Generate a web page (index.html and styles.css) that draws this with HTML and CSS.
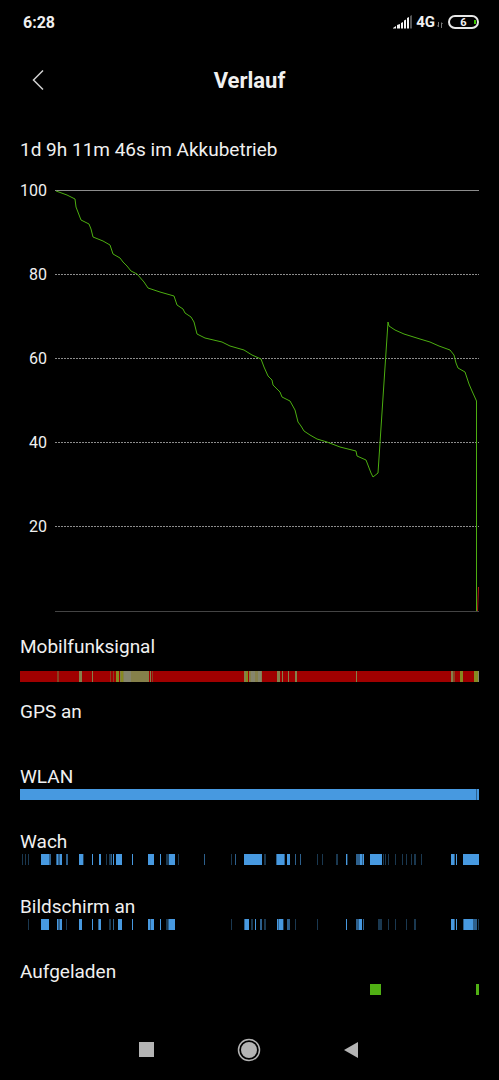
FILE: index.html
```
<!DOCTYPE html>
<html lang="de">
<head>
    <meta charset="UTF-8">
    <meta name="viewport" content="width=device-width, initial-scale=1.0">
    <title>Verlauf</title>
    <link rel="stylesheet" href="styles.css">
</head>
<body>
    <div class="statusbar">
        <span class="clock">6:28</span>
        <div class="status-icons">
            <svg class="signal" width="19" height="14" viewBox="0 0 19 14">
                <path d="M0 13.500V13l3-2v2.500z M4 13.500V10l3-1v4.500z M8 13.500V8l2-1v6.500z M11 13.500V5.500l2-1v9z M14 13.500V3l2-1v11.500z" fill="#f2f2f2"/>
                <path d="M17 13.500V1l2-1v13.500z" fill="#555"/>
            </svg>
            <span class="network">4G</span>
            <svg class="traffic" width="6" height="6" viewBox="0 0 6 6">
                <path d="M1.500 0v5M0.500 3.500l1 1.500M4.500 6V1M4.500 0.500l1 1.500" stroke="#777" fill="none"/>
            </svg>
            <div class="battery">
                <span>6</span>
                <i class="battery-level"></i>
            </div>
        </div>
    </div>

    <header class="header">
        <button class="back" type="button" aria-label="Zurück">
            <svg width="12" height="20" viewBox="0 0 12 20">
                <path d="M11 0.500L1.500 10l9.500 9.500" fill="none" stroke="#d0d0d0" stroke-width="1.500"/>
            </svg>
        </button>
        <h1>Verlauf</h1>
    </header>

    <main class="content">
        <p class="summary">1d 9h 11m 46s im Akkubetrieb</p>

        <div class="chart">
            <div class="axis">
                <span>100</span>
                <span>80</span>
                <span>60</span>
                <span>40</span>
                <span>20</span>
            </div>
            <svg class="plot" viewBox="0 0 424 422" preserveAspectRatio="none">
                <path d="M0 0.500h424" stroke="#8c8c8c"/>
                <path d="M0 84.500h424M0 168.500h424M0 252.500h424M0 336.500h424" stroke="#8c8c8c" stroke-dasharray="2 1"/>
                <path d="M0 421.500h424" stroke="#444"/>
                <polyline class="level" points="1,1 12,5 20,9 21,17 26,30 34,34 36,39 38,47 48,51 55,55 58,64 65,68 68,72 72,76 76,81 82,84 89,92 93,98 105,102 119,106 122,115 128,119 130,123 136,127 139,132 142,144 150,148 167,152 175,156 189,160 197,165 206,169 209,177 213,186 217,190 218,195 225,202 227,207 235,211 240,220 243,232 246,236 249,241 255,245 262,249 272,252 285,257 301,261 302,266 311,270 316,283 318,287 323,283 333,132 334,136 340,140 349,144 365,149 375,152 384,156 395,160 399,165 401,173 403,178 410,182 414,194 417,201 421.500,211 421.500,421"/>
                <path d="M422.500 421L423.500 397" stroke="#b01818"/>
            </svg>
        </div>

        <section class="track">
            <h2>Mobilfunksignal</h2>
            <svg class="bar bar-signal" viewBox="0 0 459 11" preserveAspectRatio="none">
                <rect width="459" height="11" fill="#a00000"/>
                <path d="M37 0h2v11h-2z M90 0h1v11h-1z M93 0h1v11h-1z M132 0h1v11h-1z M433 0h2v11h-2z" fill="#8a4020"/>
                <path d="M59 0h3v11h-3z M72 0h1v11h-1z M100 0h29v11h-29z M130 0h1v11h-1z M224 0h2v11h-2z M229 0h13v11h-13z M257 0h3v11h-3z M262 0h1v11h-1z M268 0h1v11h-1z M275 0h2v11h-2z M336 0h1v11h-1z M431 0h2v11h-2z" fill="#85804a"/>
                <path d="M96 0h3v11h-3z M101 0h2v11h-2z M226 0h2v11h-2z M440 0h3v11h-3z M454 0h4v11h-4z" fill="#868a20"/>
                <path d="M104 0h7v11h-7z M231 0h4v11h-4z M238 0h3v11h-3z M458 0h1v11h-1z" fill="#85856c"/>
            </svg>
        </section>

        <section class="track">
            <h2>GPS an</h2>
        </section>

        <section class="track">
            <h2>WLAN</h2>
            <svg class="bar" viewBox="0 0 459 11" preserveAspectRatio="none">
                <rect width="459" height="11" fill="#4799e0"/>
                <rect x="456" width="1" height="11" fill="#2d608d"/>
            </svg>
        </section>

        <section class="track">
            <h2>Wach</h2>
            <svg class="bar" viewBox="0 0 459 11" preserveAspectRatio="none">
                <path class="on" d="M21 0h8v11h-8z M37 0h1v11h-1z M40 0h2v11h-2z M59 0h4v11h-4z M72 0h1v11h-1z M79 0h2v11h-2z M93 0h1v11h-1z M96 0h6v11h-6z M112 0h1v11h-1z M128 0h6v11h-6z M140 0h1v11h-1z M149 0h6v11h-6z M224 0h18v11h-18z M257 0h7v11h-7z M267 0h3v11h-3z M326 0h1v11h-1z M340 0h2v11h-2z M343 0h1v11h-1z M350 0h12v11h-12z M431 0h3v11h-3z M436 0h1v11h-1z M443 0h16v11h-16z"/>
                <path class="mid" d="M29 0h2v11h-2z M38 0h2v11h-2z M36 0h1v11h-1z M46 0h2v11h-2z M91 0h1v11h-1z M184 0h1v11h-1z M215 0h1v11h-1z M256 0h1v11h-1z M264 0h1v11h-1z M275 0h1v11h-1z M280 0h1v11h-1z M336 0h4v11h-4z M342 0h1v11h-1z M434 0h1v11h-1z"/>
                <path class="low" d="M2 0h1v11h-1z M5 0h1v11h-1z M8 0h1v11h-1z M63 0h1v11h-1z M86 0h1v11h-1z M89 0h2v11h-2z M146 0h3v11h-3z M158 0h1v11h-1z M211 0h1v11h-1z M244 0h2v11h-2z M297 0h1v11h-1z M302 0h1v11h-1z M316 0h2v11h-2z M327 0h1v11h-1z M363 0h1v11h-1z M365 0h1v11h-1z M368 0h1v11h-1z M375 0h1v11h-1z M382 0h1v11h-1z M386 0h1v11h-1z M391 0h1v11h-1z M394 0h2v11h-2z M401 0h1v11h-1z"/>
            </svg>
        </section>

        <section class="track">
            <h2>Bildschirm an</h2>
            <svg class="bar" viewBox="0 0 459 11" preserveAspectRatio="none">
                <path class="on" d="M21 0h8v11h-8z M37 0h1v11h-1z M40 0h2v11h-2z M59 0h3v11h-3z M72 0h1v11h-1z M79 0h2v11h-2z M98 0h4v11h-4z M112 0h1v11h-1z M128 0h2v11h-2z M131 0h3v11h-3z M140 0h1v11h-1z M149 0h6v11h-6z M225 0h4v11h-4z M235 0h1v11h-1z M257 0h1v11h-1z M259 0h4v11h-4z M326 0h1v11h-1z M339 0h3v11h-3z M431 0h3v11h-3z M436 0h1v11h-1z M444 0h9v11h-9z"/>
                <path class="mid" d="M38 0h2v11h-2z M78 0h1v11h-1z M93 0h1v11h-1z M130 0h1v11h-1z M148 0h1v11h-1z M224 0h1v11h-1z M240 0h2v11h-2z M258 0h1v11h-1z M267 0h3v11h-3z M336 0h3v11h-3z M343 0h1v11h-1z M434 0h1v11h-1z M443 0h1v11h-1z M453 0h4v11h-4z"/>
                <path class="low" d="M8 0h1v11h-1z M46 0h1v11h-1z M89 0h2v11h-2z M146 0h2v11h-2z M211 0h1v11h-1z M231 0h2v11h-2z M244 0h2v11h-2z M263 0h1v11h-1z M275 0h1v11h-1z M297 0h1v11h-1z M358 0h4v11h-4z M368 0h1v11h-1z M375 0h1v11h-1z M386 0h1v11h-1z M394 0h2v11h-2z M458 0h1v11h-1z"/>
            </svg>
        </section>

        <section class="track">
            <h2>Aufgeladen</h2>
            <svg class="bar" viewBox="0 0 459 11" preserveAspectRatio="none">
                <path d="M350 0h11v11h-11z M456 0h3v11h-3z" fill="#50b014"/>
            </svg>
        </section>
    </main>

    <nav class="navbar">
        <button type="button" aria-label="Übersicht">
            <svg width="24" height="24" viewBox="0 0 24 24">
                <rect x="4" y="4" width="15" height="15" fill="#b4b4b4"/>
            </svg>
        </button>
        <button type="button" aria-label="Startseite">
            <svg width="24" height="24" viewBox="0 0 24 24">
                <circle cx="12" cy="12" r="10.500" fill="none" stroke="#b4b4b4" stroke-width="1.500"/>
                <circle cx="12" cy="12" r="8" fill="#b4b4b4"/>
            </svg>
        </button>
        <button type="button" aria-label="Zurück">
            <svg width="24" height="24" viewBox="0 0 24 24">
                <path d="M5 12L19 4V20z" fill="#b4b4b4"/>
            </svg>
        </button>
    </nav>
</body>
</html>
```
FILE: styles.css
```
* {
    box-sizing: border-box;
}
body {
    margin: 0;
    min-height: 100vh;
    display: flex;
    flex-direction: column;
    background-color: #000;
    color: #f0f0f0;
    font-family: Roboto, sans-serif;
}
h1, h2, p {
    margin: 0;
}
button {
    padding: 0;
    border: 0;
    background: none;
}
svg {
    display: block;
}
.statusbar {
    display: flex;
    justify-content: space-between;
    align-items: center;
    height: 44px;
    padding: 0 20px 0 23px;
    font-weight: 700;
}
.clock {
    font-size: 16px;
}
.status-icons {
    display: flex;
    align-items: center;
}
.network {
    margin-left: 4px;
    font-size: 15px;
}
.traffic {
    margin: 6px 5px 0 2px;
}
.battery {
    position: relative;
    width: 31px;
    height: 14px;
    border: 2px solid #e8e8e8;
    border-radius: 7px;
    font-size: 11px;
    line-height: 11px;
    text-align: center;
}
.battery-level {
    position: absolute;
    top: 3px;
    right: 1px;
    width: 2px;
    height: 4px;
    background-color: #3cc800;
}
.header {
    display: grid;
    grid-template-columns: 36px 1fr 36px;
    align-items: center;
    height: 72px;
    padding: 0 20px;
}
.back {
    display: flex;
    justify-content: center;
    height: 40px;
    align-items: center;
}
.header h1 {
    font-size: 22px;
    font-weight: 700;
    text-align: center;
}
.content {
    padding: 0 20px;
}
.summary {
    margin-top: 22px;
    font-size: 19px;
    line-height: 24px;
}
.chart {
    display: flex;
    gap: 8px;
    margin-top: 17px;
}
.axis {
    display: flex;
    flex-direction: column;
    gap: 60px;
    width: 27px;
    font-size: 16px;
    line-height: 24px;
    text-align: right;
}
.plot {
    flex: 1;
    min-width: 0;
    height: 422px;
    margin-top: 11px;
}
.level {
    fill: none;
    stroke: #4cae10;
}
.chart + .track {
    margin-top: 23px;
}
.track {
    height: 65px;
}
.track:last-child {
    height: auto;
}
.track h2 {
    font-size: 19px;
    font-weight: 400;
    line-height: 24px;
}
.bar {
    width: 100%;
    height: 11px;
}
.bar-signal {
    margin-top: 12px;
}
.on {
    fill: #4799e0;
}
.mid {
    fill: #2d608d;
}
.low {
    fill: #1a3850;
}
.navbar {
    display: flex;
    justify-content: center;
    gap: 78px;
    margin-top: auto;
    padding: 18px 2px 18px 0;
}
```
